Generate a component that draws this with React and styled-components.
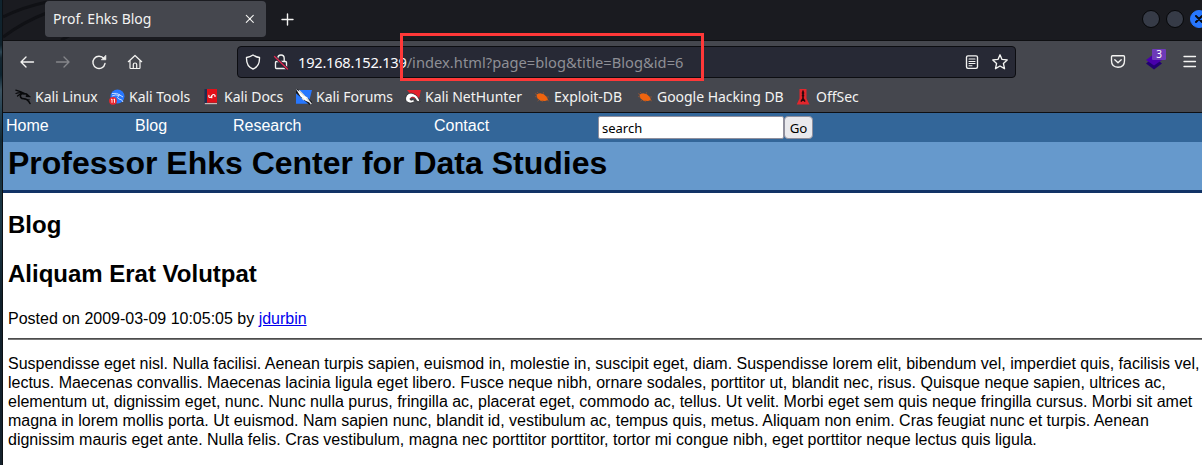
import React from 'react';
import styled, { createGlobalStyle } from 'styled-components';

const Global = createGlobalStyle`
  * { box-sizing: border-box; }
  html, body { margin: 0; background: #fff; overflow: hidden; }
`;

const Desktop = styled.div`
  width: 1202px;
  height: 465px;
  padding-left: 3px;
  overflow: hidden;
  background: linear-gradient(90deg, transparent 0 2px, #0c1014 2px 3px),
    linear-gradient(#10242f 0, #10222c 45px, #2d4654 52px, #152630 58px, #0d2430 75px, #3b5260 90px, #264354 112px, #122a38 140px, #1c3947 220px, #10202b 300px, #15222c 465px);
`;
const Window = styled.div`
  display: flex;
  flex-direction: column;
  height: 465px;
  width: 1199px;
  background: #fff;
  overflow: hidden;
`;
const uiFont = `"Noto Sans", sans-serif`;

const TitleBar = styled.div`
  position: relative;
  flex: none;
  display: flex;
  height: 41px;
  padding-left: 42px;
  background: #1a1b20;
  border-bottom: 1px solid #0e0f12;
  overflow: hidden;
`;
const ThemeArt = styled.svg`
  position: absolute;
  left: 0;
  top: 0;
`;
const Tab = styled.div`
  position: relative;
  width: 221px;
  height: 36px;
  margin-top: 1px;
  padding: 0 10px 0 8px;
  display: flex;
  align-items: center;
  justify-content: space-between;
  border-radius: 4px;
  background: #45474e;
  color: #f3f3f2;
  font: 14px/38px ${uiFont};
`;
const NewTab = styled.div`
  display: flex;
  margin: 13px 0 0 15px;
`;
const Controls = styled.div`
  display: flex;
  gap: 6px;
  margin: 10px -6px 0 auto;
`;
const Control = styled.span`
  display: grid;
  place-items: center;
  width: 18px;
  height: 18px;
  border-radius: 50%;
  border: 1px solid ${p => (p.$close ? '#2777ff' : '#060709')};
  background: ${p => (p.$close ? '#2777ff' : '#363b47')};
`;

const Toolbar = styled.div`
  flex: none;
  display: flex;
  align-items: center;
  height: 41px;
  background: #45474e;
`;
const NavButtons = styled.div`
  display: flex;
  gap: 20px;
  width: 234px;
  padding-left: 16px;
`;
const AddressBar = styled.div`
  display: flex;
  align-items: center;
  width: 779px;
  height: 32px;
  padding: 0 7px;
  border: 1px solid #0c0d11;
  border-radius: 4px;
  background: #272935;
`;
const Address = styled.div`
  flex: 1;
  margin-left: 9px;
  color: #8e8f95;
  font: 14.67px/30px ${uiFont};
  letter-spacing: 0.03px;
  white-space: nowrap;
`;
const Host = styled.span`
  color: #fbfbfe;
  letter-spacing: -0.25px;
`;
const Icon = styled.svg`
  display: block;
  flex: none;
  margin-left: ${p => p.$ml || 0}px;
  fill: none;
  stroke: ${p => p.$c || '#f4f4f2'};
  stroke-width: ${p => p.$w || 1.35};
  stroke-linecap: round;
  stroke-linejoin: round;
`;
const Extension = styled.div`
  position: relative;
  margin-left: 19px;
  width: 18px;
  height: 20px;
`;
const Count = styled.span`
  position: absolute;
  left: 7px;
  top: -3px;
  width: 14px;
  height: 11px;
  border-radius: 1px;
  background: #6d3ab8;
  color: #fff;
  font: 10px/11px ${uiFont};
  text-align: center;
`;

const Bookmarks = styled.div`
  flex: none;
  display: grid;
  grid-template-columns: 94px 95px 92px 109px 129px 103px 159px 90px;
  height: 31px;
  padding-left: 12px;
  background: #45474e;
  border-bottom: 1px solid #0e0f12;
`;
const Bookmark = styled.div`
  display: flex;
  align-items: center;
  gap: 4px;
  color: #f3f3f2;
  font: 14px/30px ${uiFont};
  letter-spacing: -0.03px;
  white-space: nowrap;
`;
const BookmarkIcon = styled.svg`
  flex: none;
  width: 16px;
  height: 16px;
`;

const SiteNav = styled.nav`
  flex: none;
  display: grid;
  grid-template-columns: 129px 98px 201px 164px 215px;
  height: 29px;
  padding-left: 3px;
  background: #336699;
`;
const NavLink = styled.a`
  color: #fff;
  font: 16px/25px "Liberation Sans", Arial, sans-serif;
`;
const Search = styled.form`
  display: flex;
  height: 23px;
  margin-top: 3px;
`;
const SearchInput = styled.input`
  width: 186px;
  height: 23px;
  padding: 1px 3px 0;
  border: 1px solid #8f8f9d;
  border-radius: 2px;
  background: #fff;
  color: #000;
  font: 13px ${uiFont};
`;
const Go = styled.button`
  width: 29px;
  height: 23px;
  padding: 0;
  border: 1px solid #8f8f9d;
  border-radius: 4px;
  background: #e9e9ed;
  color: #000;
  font: 13.3px ${uiFont};
`;
const SiteTitle = styled.h1`
  flex: none;
  height: 51px;
  margin: 0;
  padding-left: 5px;
  border-bottom: 3px solid #113366;
  background: #6699cc;
  color: #000;
  font: bold 32px/42px "Liberation Sans", Arial, sans-serif;
`;
const Content = styled.main`
  padding: 18px 0 0 5px;
  color: #000;
  font: 16px/19px "Liberation Sans", Arial, sans-serif;
  letter-spacing: -0.007px;
`;
const Heading = styled.h2`
  margin: 0 0 21px;
  font-size: 24px;
  line-height: 28px;
`;
const Posted = styled.p`
  margin: 0 0 10px;
  a { color: #0000ee; text-decoration: underline; }
`;
const Rule = styled.div`
  height: 2px;
  background: linear-gradient(#4c4c4c 0 1px, #777 1px 2px);
`;
const Story = styled.p`
  margin: 14px 0 0;
  white-space: pre;
`;
const Highlight = styled.div`
  position: absolute;
  left: 400px;
  top: 33px;
  width: 304px;
  height: 48px;
  border: 3px solid #ff3838;
`;

const marks = {
  dragon: (
    <g fill="none" stroke="#08090b" strokeLinecap="round">
      <path d="M.8 1.2C4 2 6.500 2.500 9.500 4.500M1 4.500C4 3.300 6.500 3.500 9 4.700M2.500 7C4.500 5.200 6.500 4.800 8 5" strokeWidth="1.200" />
      <path d="M6 4.800C4.500 8 6 9.700 9 9.800C12 10 13.500 11.500 15 14.500" strokeWidth="1.600" />
      <path d="M8.500 4.700L11.500 5L14 7.300L11.500 7.100" strokeWidth="1.700" />
      <path d="M9.500 10L14.500 10.800" strokeWidth=".8" />
    </g>
  ),
  tools: (
    <g>
      <circle cx="8.500" cy="7.500" r="7" fill="#2777ff" />
      <path d="M3 4.500Q8 3.500 11 6M3 7Q7 5 10 6.500Q7 9 10 10Q13 10 14 13M10 5.500L14 8" fill="none" stroke="#c5dcff" strokeWidth="1" />
      <circle cx="4" cy="11.800" r="3.900" fill="#e9262e" />
      <path d="M2.100 10.500L3 10v3.800M4.600 10.500L5.500 10v3.800" fill="none" stroke="#fff" strokeWidth=".9" />
    </g>
  ),
  docs: (
    <g>
      <path d="M3 0H13V13.700H3Z" fill="#e31019" />
      <path d="M.5 0H3V13.500L.5 15Z" fill="#202d50" />
      <path d="M.8 14H13V15.200H.8Z" fill="#c8b9b7" />
      <path d="M5 5.800Q4.300 9 6.300 8.500Q7.500 8 8 6.500Q9.500 4.500 11 6.300V8M7.800 6V9.300" fill="none" stroke="#fff" strokeWidth="1.100" />
    </g>
  ),
  forums: (
    <g>
      <path d="M0 1H16L12.500 14.800H0Z" fill="#2777ff" />
      <path d="M0 1.500L15 14.500" stroke="#15181d" strokeWidth="4" />
      <path d="M0 0L4.500 7.500L9 11.500L13.500 13.500L11.500 8.500L7 5.500Z" fill="#fff" />
      <path d="M3 1.500L8.500 7M6 9L8 11M10.500 9L15.300 15" stroke="#ddd" strokeWidth="1.300" />
    </g>
  ),
  hunter: (
    <g>
      <path d="M2 1H16L13.500 12L8 8Z" fill="#e3202a" />
      <path d="M.5 10C1 5 4.500 3.500 8 4.500C12 6 14 9 15 13L11.500 12C10.500 8 7.500 7.500 5.500 9C4 11 6.500 12 8 10.500L9.500 12C7 15.500 1 14 .5 10Z" fill="#fff" stroke="#17181c" strokeWidth=".7" />
      <path d="M5.500 9.500C6.500 8 9 8 10 9.500" fill="none" stroke="#e3202a" strokeWidth="1" />
    </g>
  ),
  bug: (
    <g>
      <path d="M2.500 5.500L6 4.200L9.800 5.300L13 8.300L14 11L11 12L6.500 11.800L3.300 9.200Z" fill="#f0640f" />
      <path d="M5 5L3 3M9 5L9.500 3M3.500 8L1 7.500M5 11L3.500 12.200M9 11L8 13M12 8H15M13 11L15 12M3 5.500L1 4.500" fill="none" stroke="#a9582b" strokeWidth=".6" />
    </g>
  ),
  offsec: (
    <g>
      <path d="M3.500 0H10.500V9.500L13.500 15.500H.7L3.500 9.500Z" fill="#e2262c" />
      <path d="M7 1.500V12M5.800 4H8.200M5 12.700L7 9.500L9 12.700M5.800 6.500H8.200" fill="none" stroke="#25080b" strokeWidth="1.600" />
    </g>
  ),
};
const bookmarks = [
  ['dragon', 'Kali Linux'], ['tools', 'Kali Tools'], ['docs', 'Kali Docs'], ['forums', 'Kali Forums'],
  ['hunter', 'Kali NetHunter'], ['bug', 'Exploit-DB'], ['bug', 'Google Hacking DB'], ['offsec', 'OffSec'],
];
const story = `Suspendisse eget nisl. Nulla facilisi. Aenean turpis sapien, euismod in, molestie in, suscipit eget, diam. Suspendisse lorem elit, bibendum vel, imperdiet quis, facilisis vel,
lectus. Maecenas convallis. Maecenas lacinia ligula eget libero. Fusce neque nibh, ornare sodales, porttitor ut, blandit nec, risus. Quisque neque sapien, ultrices ac,
elementum ut, dignissim eget, nunc. Nunc nulla purus, fringilla ac, placerat eget, commodo ac, tellus. Ut velit. Morbi eget sem quis neque fringilla cursus. Morbi sit amet
magna in lorem mollis porta. Ut euismod. Nam sapien nunc, blandit id, vestibulum ac, tempus quis, metus. Aliquam non enim. Cras feugiat nunc et turpis. Aenean
dignissim mauris eget ante. Nulla felis. Cras vestibulum, magna nec porttitor porttitor, tortor mi congue nibh, eget porttitor neque lectus quis ligula.`;

export default function App() {
  return (
    <Desktop>
      <Global />
      <Window>
        <TitleBar>
          <ThemeArt width="110" height="40" fill="none" stroke="#101115" strokeWidth="3">
            <path d="M0 17Q20 7 44 2M0 37Q20 22 46 12M58 40L66 36" />
          </ThemeArt>
          <Tab>
            <span>Prof. Ehks Blog</span>
            <Icon width="12" height="12" $w={1.1}><path d="M2.300 2.300L9.300 9.300M9.300 2.300L2.300 9.300" /></Icon>
          </Tab>
          <NewTab><Icon width="13" height="13" $w={1.4}><path d="M6.500 1V12M1 6.500H12" /></Icon></NewTab>
          <Controls>
            <Control /><Control />
            <Control $close><Icon width="10" height="10" $c="#080b10" $w={2}><path d="M2 2L8 8M8 2L2 8" /></Icon></Control>
          </Controls>
        </TitleBar>
        <Toolbar>
          <NavButtons>
            <Icon width="16" height="16"><path d="M14.500 8H2M7 3L2 8L7 13" /></Icon>
            <Icon width="16" height="16" $c="#85868a"><path d="M1.500 8H14M9 3L14 8L9 13" /></Icon>
            <Icon width="16" height="16"><path d="M14 9.500A6.100 6.100 0 1 1 12.900 4.700" /><path d="M10.600 5.800H14.900V1.500Z" fill="#f4f4f2" strokeWidth=".6" /></Icon>
            <Icon width="16" height="16"><path d="M1.300 7.700L8 1.500L14.700 7.700M3 6.500V13.800Q3 14.500 3.700 14.500H12.300Q13 14.500 13 13.800V6.500M6.300 14V10.500Q6.300 9 8 9Q9.700 9 9.700 10.500V14" strokeWidth="1.200" /></Icon>
          </NavButtons>
          <AddressBar>
            <Icon width="16" height="16"><path d="M8 1Q11 3 14.500 3.500C14.700 9 12.500 13.500 8 15C3.500 13.500 1.300 9 1.500 3.500Q5 3 8 1Z" /></Icon>
            <Icon width="16" height="16" $ml={12}>
              <path d="M4.800 7V4.200A3.200 3.200 0 0 1 11.200 4.200V7M3.500 7.500H12.500Q13.500 7.500 13.500 8.500V13.500Q13.500 14.500 12.500 14.500H3.500Q2.500 14.500 2.500 13.500V8.500Q2.500 7.500 3.500 7.500" />
              <path d="M1.500 2.500L14.500 15" stroke="#272935" strokeWidth="3" />
              <path d="M1.500 2.500L14.500 15" stroke="#e22850" strokeWidth="1.300" />
            </Icon>
            <Address><Host>192.168.152.139</Host>/index.html?page=blog&amp;title=Blog&amp;id=6</Address>
            <Icon width="14" height="16"><rect x="1.500" y="1.800" width="11" height="12.500" rx="1.500" /><path d="M4 5H10M4 7.500H10M4 9.500H10M4 11.700H7" strokeWidth="1.100" /></Icon>
            <Icon width="16" height="16" $ml={13}><path d="M8 .8L10 5.400L15.200 5.900L11.400 9.400L12.500 14.700L8 12L3.500 14.700L4.600 9.400L.8 5.900L6 5.400Z" /></Icon>
          </AddressBar>
          <Icon width="16" height="16" $ml={94}><path d="M2.500 1.700H13.500Q14.500 1.700 14.500 2.700V6.700Q14.500 13.200 8 13.200Q1.500 13.200 1.500 6.700V2.700Q1.500 1.700 2.500 1.700M4.800 5.700L8 8.700L11.200 5.700" /></Icon>
          <Extension>
            <svg width="18" height="20"><path d="M1 11.500L9 17.500L17 11.500L14 9H4Z" fill="#220072" /><path d="M1 8L9 2L17 8L9 13.500Z" fill="#4900ac" /></svg>
            <Count>3</Count>
          </Extension>
          <Icon width="14" height="14" $ml={20} $w={1.3}><path d="M1 1.500H12.500M1 6.500H12.500M1 11.500H12.500" /></Icon>
        </Toolbar>
        <Bookmarks>
          {bookmarks.map(([mark, label]) => (
            <Bookmark key={label}><BookmarkIcon viewBox="0 0 16 16">{marks[mark]}</BookmarkIcon>{label}</Bookmark>
          ))}
        </Bookmarks>
        <SiteNav>
          <NavLink>Home</NavLink><NavLink>Blog</NavLink><NavLink>Research</NavLink><NavLink>Contact</NavLink>
          <Search><SearchInput defaultValue="search" /><Go type="button">Go</Go></Search>
        </SiteNav>
        <SiteTitle>Professor Ehks Center for Data Studies</SiteTitle>
        <Content>
          <Heading>Blog</Heading>
          <Heading>Aliquam Erat Volutpat</Heading>
          <Posted>Posted on 2009-03-09 10:05:05 by <a>jdurbin</a></Posted>
          <Rule />
          <Story>{story}</Story>
        </Content>
      </Window>
      <Highlight />
    </Desktop>
  );
}
